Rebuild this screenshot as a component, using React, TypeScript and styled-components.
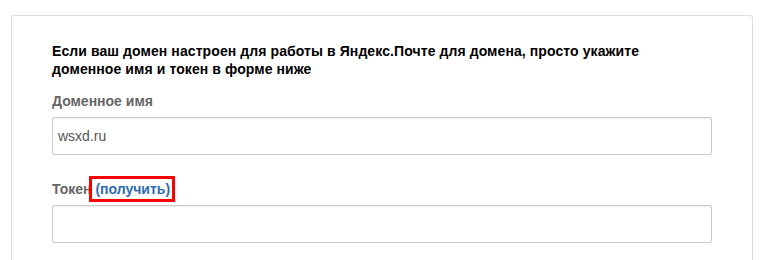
import React from "react";
import styled, { createGlobalStyle } from "styled-components";

const GlobalStyle = createGlobalStyle`
  html, body {
    margin: 0;
    padding: 0;
    background: #ffffff;
  }
  body {
    font-family: "Liberation Sans", Arial, sans-serif;
    font-size: 14px;
  }
`;

const Page = styled.div`
  padding: 15px 0 0 11px;
`;

const Panel = styled.section`
  box-sizing: border-box;
  width: 742px;
  border: 1px solid #d3dde3;
  border-radius: 3px;
  padding: 26px 40px 40px 40px;
  background: #ffffff;
`;

const Intro = styled.p`
  margin: 0 0 12px 0;
  font-weight: bold;
  font-size: 14px;
  line-height: 18.3px;
  letter-spacing: 0.09px;
  color: #000000;
`;

const Group = styled.div<{ $gap?: number }>`
  display: flex;
  flex-direction: column;
  margin-bottom: ${(p) => p.$gap ?? 0}px;
`;

const Label = styled.label`
  display: block;
  font-weight: bold;
  font-size: 14px;
  line-height: 20px;
  color: #666666;
  margin-bottom: 6px;
`;

const Link = styled.a`
  position: relative;
  color: #2e6cb3;
  text-decoration: none;
  &::after {
    content: "";
    position: absolute;
    left: -6px;
    right: -5px;
    top: -5px;
    bottom: -5px;
    border: 3px solid #ff0000;
    pointer-events: none;
  }
`;

const Input = styled.input`
  box-sizing: border-box;
  width: 100%;
  height: 38px;
  border: 1px solid #cccccc;
  border-radius: 2px;
  box-shadow: inset 0 1px 1px rgba(0, 0, 0, 0.075);
  padding: 0 5px;
  font-family: "Liberation Sans", Arial, sans-serif;
  font-size: 14px;
  color: #555555;
  background: #ffffff;
  outline: none;
`;

export default function App() {
  return (
    <>
      <GlobalStyle />
      <Page>
        <Panel>
          <Intro>
            Если ваш домен настроен для работы в Яндекс.Почте для домена, просто укажите
            <br />
            доменное имя и токен в форме ниже
          </Intro>
          <Group $gap={24}>
            <Label>Доменное имя</Label>
            <Input defaultValue="wsxd.ru" />
          </Group>
          <Group>
            <Label>
              Токен <Link href="#">(получить)</Link>
            </Label>
            <Input defaultValue="" />
          </Group>
        </Panel>
      </Page>
    </>
  );
}
